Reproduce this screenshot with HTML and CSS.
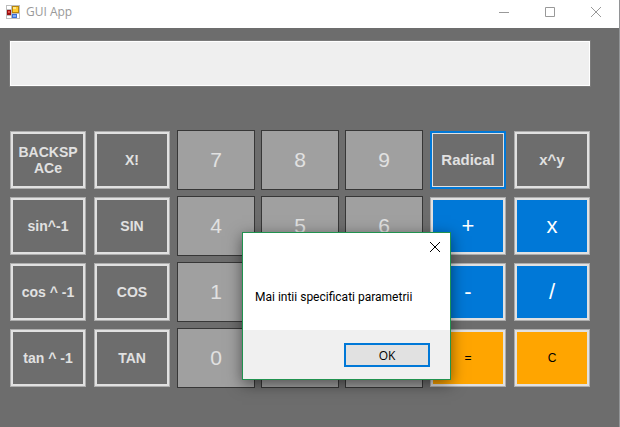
FILE: index.html
```html
<!DOCTYPE html>
<html lang="ro">
<head>
<meta charset="utf-8">
<title>GUI App</title>
<link rel="stylesheet" href="styles.css">
</head>
<body>
<div class="window">
  <header class="titlebar">
    <svg class="app-icon" width="14" height="14" viewBox="0 0 14 14" shape-rendering="crispEdges" aria-hidden="true">
      <rect width="14" height="14" fill="#bdbdbd"/>
      <path d="M1 1h4v3H1zM1 11h4v2H1zM11 9h2v4h-2z" fill="#fff"/>
      <rect x="1" y="5" width="4" height="5" fill="#9c1010"/>
      <rect x="2" y="6" width="2" height="2" fill="#e05048"/>
      <rect x="6" y="1" width="7" height="7" fill="#b8860b"/>
      <rect x="7" y="2" width="5" height="5" fill="#ffcb2e"/>
      <rect x="7" y="2" width="3" height="2" fill="#ffe789"/>
      <rect x="6" y="9" width="5" height="4" fill="#3a6fd8"/>
      <rect x="7" y="10" width="3" height="2" fill="#7fa9f5"/>
    </svg>
    <h1 class="title">GUI App</h1>
    <div class="window-controls">
      <button class="control" aria-label="Minimize"><svg width="10" height="10" viewBox="0 0 10 10"><path d="M0 5.500h10"/></svg></button>
      <button class="control" aria-label="Maximize"><svg width="10" height="10" viewBox="0 0 10 10"><path d="M.5.5h9v9h-9z"/></svg></button>
      <button class="control" aria-label="Close"><svg width="10" height="10" viewBox="0 0 10 10"><path d="M0 0l10 10M10 0L0 10"/></svg></button>
    </div>
  </header>
  <main class="calculator">
    <input class="display" type="text" aria-label="Display" readonly>
    <div class="keys">
      <button class="key">BACKSPACe</button>
      <button class="key">X!</button>
      <button class="key digit">7</button>
      <button class="key digit">8</button>
      <button class="key digit">9</button>
      <button class="key large focused">Radical</button>
      <button class="key large">x^y</button>

      <button class="key">sin^-1</button>
      <button class="key">SIN</button>
      <button class="key digit">4</button>
      <button class="key digit">5</button>
      <button class="key digit">6</button>
      <button class="key operator">+</button>
      <button class="key operator">x</button>

      <button class="key">cos ^ -1</button>
      <button class="key">COS</button>
      <button class="key digit">1</button>
      <button class="key digit" aria-label="2"></button>
      <button class="key digit" aria-label="3"></button>
      <button class="key operator">-</button>
      <button class="key operator">/</button>

      <button class="key">tan ^ -1</button>
      <button class="key">TAN</button>
      <button class="key digit">0</button>
      <button class="key digit" aria-label="Decimal point"></button>
      <button class="key digit" aria-label="Sign"></button>
      <button class="key action">=</button>
      <button class="key action">C</button>
    </div>
  </main>
  <div class="dialog" role="alertdialog" aria-modal="true" aria-describedby="message">
    <div class="dialog-top">
      <button class="dialog-close" aria-label="Close dialog"><svg width="10" height="10" viewBox="0 0 10 10"><path d="M0 0l10 10M10 0L0 10"/></svg></button>
    </div>
    <p class="message" id="message">Mai intii specificati parametrii</p>
    <div class="dialog-footer"><button class="ok">OK</button></div>
  </div>
</div>
</body>
</html>
```
FILE: styles.css
```css
* {
  box-sizing: border-box;
}

body {
  margin: 0;
  background: #6d6d6d;
  font-family: "Open Sans", "Noto Sans", sans-serif;
  font-size: 12px;
}

button {
  margin: 0;
  padding: 0;
  font-family: inherit;
}

svg {
  display: block;
  fill: none;
}

.window {
  position: relative;
  min-height: 100vh;
  border-right: 1px solid #929496;
}

.titlebar {
  display: flex;
  align-items: center;
  height: 28px;
  padding: 0 0 4px 6px;
  background: #fff;
}

.title {
  margin: 0 0 0 6px;
  color: #999;
  font-size: 12px;
  font-weight: 400;
  line-height: 16px;
}

.window-controls {
  display: flex;
  margin-left: auto;
}

.control {
  display: grid;
  place-items: center;
  width: 46px;
  height: 24px;
  border: 0;
  background: none;
  stroke: #999;
}

.calculator {
  padding: 13px 25px 36px 6px;
}

.display {
  display: block;
  width: calc(100% - 8px);
  height: 45px;
  margin: 0 4px 41px;
  padding: 0 8px;
  border: 1px solid #fff;
  outline: 1px solid #7a7a7a;
  background: #efefef;
  font: 20px "Liberation Sans", sans-serif;
}

.keys {
  display: grid;
  grid-template-columns: repeat(7, 1fr);
  grid-auto-rows: 66px;
}

.key {
  margin: 4px;
  padding: 0 6px;
  border: 1px solid #adadad;
  background: #6d6d6d;
  box-shadow: inset 0 0 0 2px #e1e1e1;
  color: #e1e1e1;
  font: bold 14px/16px "Liberation Sans", sans-serif;
  overflow-wrap: anywhere;
}

.large {
  font-size: 15px;
}

.focused {
  border: 2px solid #0078d7;
  box-shadow: inset 0 0 0 1px #e1e1e1;
}

.digit {
  margin: 3px;
  border-color: #373737;
  background: #a0a0a0;
  box-shadow: none;
  font-size: 21px;
  font-weight: 400;
}

.operator {
  background: #0078d7;
  color: #fff;
  font-size: 22px;
  font-weight: 400;
}

.action {
  background: orange;
  color: #000;
  font-size: 12px;
  font-weight: 400;
}

.dialog {
  position: absolute;
  top: 232px;
  left: 242px;
  width: 209px;
  border: 1px solid #20924f;
  background: #fff;
  box-shadow: 0 4px 14px rgba(0, 0, 0, 0.5);
}

.dialog-top {
  display: flex;
  justify-content: flex-end;
  padding: 4px 5px;
}

.dialog-close {
  display: grid;
  place-items: center;
  width: 20px;
  height: 20px;
  border: 0;
  background: none;
  stroke: #000;
}

.message {
  margin: 28px 12px 25px;
  color: #000;
  font-family: Roboto, sans-serif;
  font-size: 12px;
  line-height: 16px;
  white-space: nowrap;
}

.dialog-footer {
  display: flex;
  justify-content: flex-end;
  padding: 13px 20px 12px;
  background: #f0f0f0;
}

.ok {
  width: 86px;
  height: 24px;
  border: 2px solid #0078d7;
  background: #e1e1e1;
  color: #000;
  font-size: 12px;
}
```
